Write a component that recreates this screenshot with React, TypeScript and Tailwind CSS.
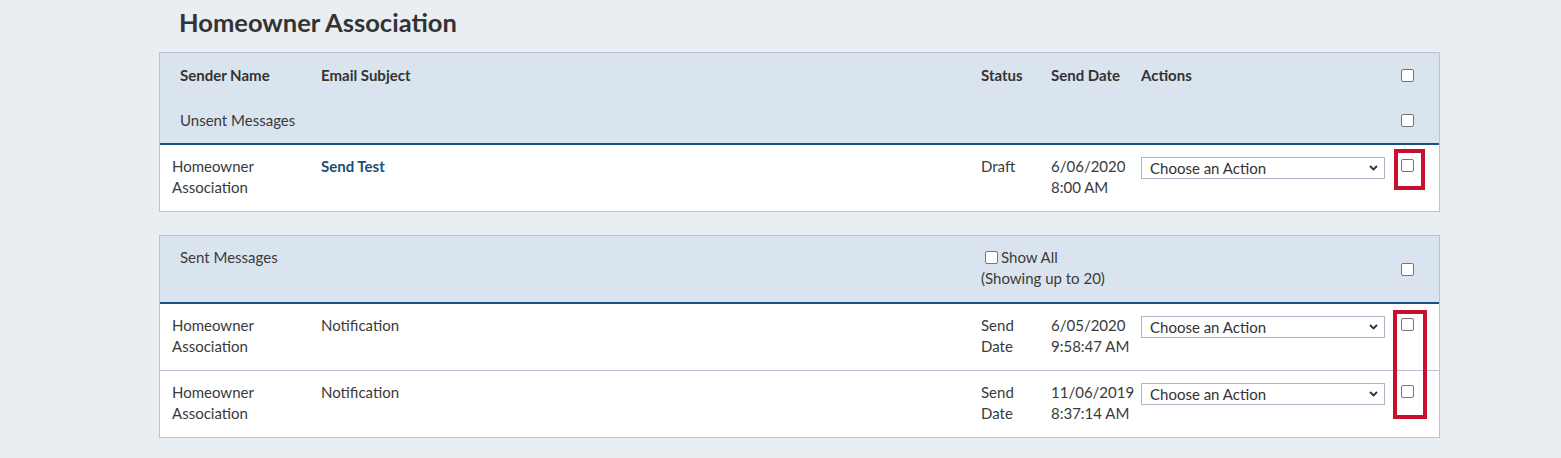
import React from "react";

const font = { fontFamily: "Lato, 'Open Sans', sans-serif" };

function Check() {
  return (
    <span className="block w-[13px] h-[13px] rounded-[2px] border border-[#767676] bg-white" />
  );
}

function ActionSelect() {
  return (
    <div className="relative w-[244px] h-[22px] border border-[#aab8c6] bg-white flex items-center pl-[8px] text-[15px] text-[#333]">
      <span>Choose an Action</span>
      <svg className="absolute right-[6px] top-[7px]" width="9" height="6" viewBox="0 0 9 6">
        <path d="M1 1 L4.5 4.5 L8 1" fill="none" stroke="#333" strokeWidth="1.8" />
      </svg>
    </div>
  );
}

const cols = "grid grid-cols-[161px_660px_70px_90px_253px_1fr]";

function Row({
  sender,
  subject,
  bold,
  status,
  date,
  last,
}: {
  sender: string[];
  subject: string;
  bold?: boolean;
  status: string[];
  date: string[];
  last?: boolean;
}) {
  return (
    <div className={`${cols} ${last ? "h-[66px]" : "h-[67px] border-b border-[#b7c4d2]"} text-[15px] leading-[21px] text-[#3a3a3a]`}>
      <div className="pl-[12px] pt-[11px]">
        {sender.map((s) => (
          <div key={s}>{s}</div>
        ))}
      </div>
      <div className={`pt-[11px] ${bold ? "font-bold text-[#1d4d78]" : ""}`}>{subject}</div>
      <div className="pt-[11px]">
        {status.map((s) => (
          <div key={s}>{s}</div>
        ))}
      </div>
      <div className="pt-[11px]">
        {date.map((s) => (
          <div key={s}>{s}</div>
        ))}
      </div>
      <div className="pt-[12px]">
        <ActionSelect />
      </div>
      <div className="pl-[7px] pt-[14px]">
        <Check />
      </div>
    </div>
  );
}

export default function App() {
  return (
    <div className="min-h-[458px] bg-[#e9eef3] pt-[8px]" style={font}>
      <div className="ml-[159px] w-[1281px]">
        <h1 className="pl-[20px] text-[25.5px] leading-[28px] font-bold text-[#333] mb-[16px]">
          Homeowner Association
        </h1>

        <div className="border border-[#b7c4d2] bg-white">
          <div className="bg-[#dae4ef] border-b-2 border-[#1c5182]">
            <div className={`${cols} h-[45px] items-center text-[15px] font-bold text-[#333]`}>
              <div className="pl-[20px]">Sender Name</div>
              <div>Email Subject</div>
              <div>Status</div>
              <div>Send Date</div>
              <div>Actions</div>
              <div className="pl-[7px] flex items-center">
                <Check />
              </div>
            </div>
            <div className={`${cols} h-[45px] items-center text-[15px] text-[#3a3a3a]`}>
              <div className="pl-[20px] col-span-5">Unsent Messages</div>
              <div className="pl-[7px] flex items-center">
                <Check />
              </div>
            </div>
          </div>
          <div className="relative">
            <Row
              sender={["Homeowner", "Association"]}
              subject="Send Test"
              bold
              status={["Draft"]}
              date={["6/06/2020", "8:00 AM"]}
              last
            />
            <div className="absolute left-[1234px] top-[4px] w-[31px] h-[41px] border-[4px] border-[#c8102e]" />
          </div>
        </div>

        <div className="mt-[23px] border border-[#b7c4d2] bg-white">
          <div className={`${cols} h-[68px] bg-[#dae4ef] border-b-2 border-[#1c5182] text-[15px] leading-[21px] text-[#3a3a3a]`}>
            <div className="pl-[20px] pt-[11px] col-span-2">Sent Messages</div>
            <div className="pt-[11px] col-span-3 pl-[4px]">
              <div className="flex items-center gap-[3px]">
                <Check />
                <span>Show All</span>
              </div>
              <div className="-ml-[4px]">(Showing up to 20)</div>
            </div>
            <div className="pl-[7px] flex items-center">
              <Check />
            </div>
          </div>
          <div className="relative">
            <Row
              sender={["Homeowner", "Association"]}
              subject="Notification"
              status={["Send", "Date"]}
              date={["6/05/2020", "9:58:47 AM"]}
            />
            <Row
              sender={["Homeowner", "Association"]}
              subject="Notification"
              status={["Send", "Date"]}
              date={["11/06/2019", "8:37:14 AM"]}
              last
            />
            <div className="absolute left-[1233px] top-[6px] w-[34px] h-[109px] border-[4px] border-[#c8102e]" />
          </div>
        </div>
      </div>
    </div>
  );
}
